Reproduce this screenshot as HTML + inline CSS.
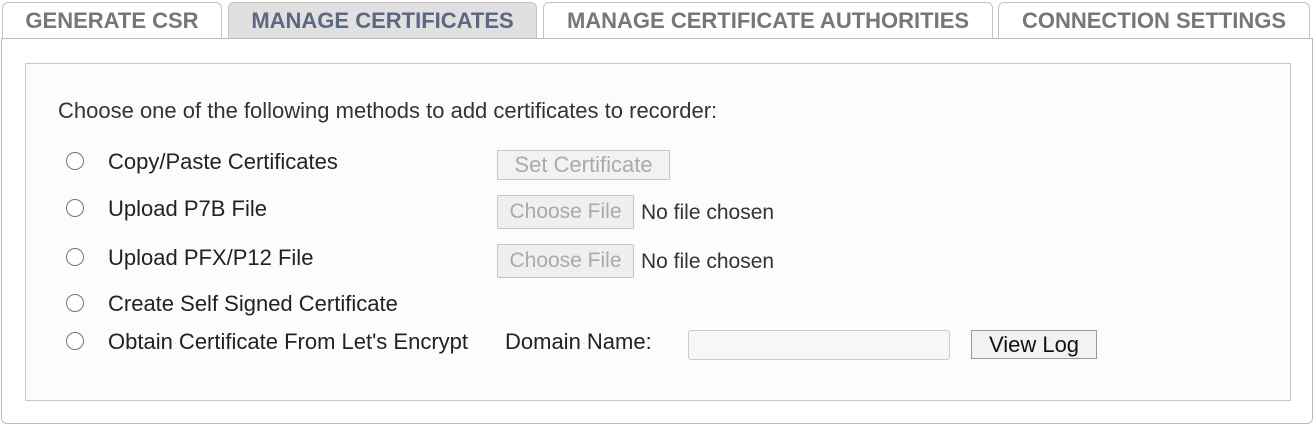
<!DOCTYPE html>
<html><head><style>
body{margin:0;width:1315px;height:426px;background:#fff;font-family:"Liberation Sans",Arial,sans-serif;position:relative;overflow:hidden}
.a{position:absolute}
.tab{position:absolute;top:2px;height:36px;border:1px solid #c4c4c4;border-bottom:none;border-radius:6px 6px 0 0;background:#fff;color:#777;font-weight:bold;font-size:22px;line-height:36px;text-align:center;box-sizing:border-box;white-space:nowrap}
.panel{left:1px;top:38px;width:1312px;height:386px;border:1px solid #bbb;border-radius:0 0 6px 6px;box-sizing:border-box}
.inner{left:25px;top:63px;width:1266px;height:338px;border:1px solid #c8c8c8;background:#fcfcfc;box-sizing:border-box}
.t{position:absolute;font-size:22px;color:#222;white-space:nowrap}
.r{position:absolute;left:66px;width:18px;height:18px;border:1px solid #767676;border-radius:50%;box-sizing:border-box;background:#fff}
.btn{position:absolute;border:1px solid #c6c6c6;background:#efefef;color:#aaa;font-size:22px;box-sizing:border-box;text-align:center;border-radius:2px;white-space:nowrap}
</style></head><body>
<div class="tab" style="left:2px;width:220px">GENERATE CSR</div>
<div class="tab" style="left:228px;width:309px;background:#e0e0e0;color:#5c6780">MANAGE CERTIFICATES</div>
<div class="tab" style="left:543px;width:450px">MANAGE CERTIFICATE AUTHORITIES</div>
<div class="tab" style="left:998px;width:312px">CONNECTION SETTINGS</div>
<div class="a panel"></div>
<div class="a inner"></div>
<div class="t" style="left:58px;top:98px;color:#333">Choose one of the following methods to add certificates to recorder:</div>
<div class="r" style="top:152px"></div><div class="t" style="left:108px;top:149px">Copy/Paste Certificates</div>
<div class="btn" style="left:497px;top:150px;width:173px;height:30px;line-height:28px;background:#f2f2f2;border-radius:0">Set Certificate</div>
<div class="r" style="top:199px"></div><div class="t" style="left:108px;top:196px">Upload P7B File</div>
<div class="btn" style="left:497px;top:195px;width:137px;height:34px;line-height:32px;font-size:21px">Choose File</div><div class="t" style="left:641px;top:201px;color:#333;font-size:21px">No file chosen</div>
<div class="r" style="top:248px"></div><div class="t" style="left:108px;top:245px">Upload PFX/P12 File</div>
<div class="btn" style="left:497px;top:244px;width:137px;height:34px;line-height:32px;font-size:21px">Choose File</div><div class="t" style="left:641px;top:250px;color:#333;font-size:21px">No file chosen</div>
<div class="r" style="top:294px"></div><div class="t" style="left:108px;top:291px">Create Self Signed Certificate</div>
<div class="r" style="top:332px"></div><div class="t" style="left:108px;top:329px">Obtain Certificate From Let's Encrypt</div>
<div class="t" style="left:505px;top:329px">Domain Name:</div>
<div class="a" style="left:688px;top:330px;width:262px;height:30px;border:1px solid #ccc;border-radius:3px;background:#f7f7f7;box-sizing:border-box"></div>
<div class="btn" style="left:971px;top:330px;width:126px;height:29px;line-height:27px;color:#111;background:#f2f2f2;border-color:#999;border-radius:0">View Log</div>
</body></html>
